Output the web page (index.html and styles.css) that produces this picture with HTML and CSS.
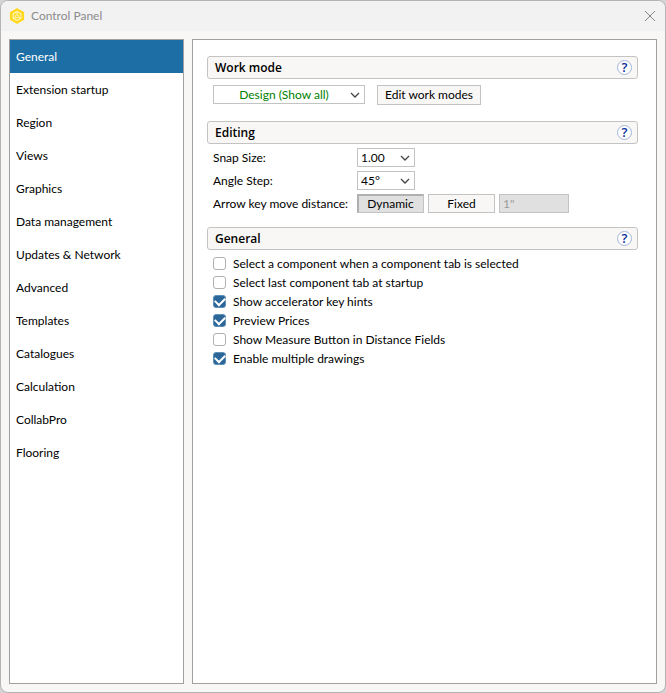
FILE: index.html
```html
<!DOCTYPE html>
<html lang="en">
<head>
<meta charset="utf-8">
<meta name="viewport" content="width=device-width, initial-scale=1">
<title>Control Panel</title>
<link rel="stylesheet" href="styles.css">
</head>
<body>
<div class="window">
  <header class="titlebar">
    <svg class="logo" viewBox="0 0 16 16" aria-hidden="true">
      <path d="M8 .8 14.5 4.4V11.6L8 15.2 1.5 11.6V4.4Z" fill="#ffd91f" stroke="#ffd91f" stroke-width="1.2" stroke-linejoin="round"/>
      <path d="M8 3.6 11.8 5.8V10.2L8 12.4 4.2 10.2V5.8Z" fill="none" stroke="#fff6bd" stroke-width="1.2" stroke-linejoin="round"/>
      <path d="M8 4V7M5 10 7 9M11 10 9 9" stroke="#fff6bd"/>
      <circle cx="8" cy="8.2" r="1.5" fill="none" stroke="#fff6bd"/>
    </svg>
    <h1 class="title">Control Panel</h1>
    <button class="close" type="button" aria-label="Close">
      <svg viewBox="0 0 12 12" aria-hidden="true"><path d="M1 1 11 11M11 1 1 11"/></svg>
    </button>
  </header>
  <div class="body">
    <nav class="nav" aria-label="Categories">
      <a class="nav-item current" href="#general" aria-current="page">General</a>
      <a class="nav-item" href="#extension">Extension startup</a>
      <a class="nav-item" href="#region">Region</a>
      <a class="nav-item" href="#views">Views</a>
      <a class="nav-item" href="#graphics">Graphics</a>
      <a class="nav-item" href="#data">Data management</a>
      <a class="nav-item" href="#updates">Updates &amp; Network</a>
      <a class="nav-item" href="#advanced">Advanced</a>
      <a class="nav-item" href="#templates">Templates</a>
      <a class="nav-item" href="#catalogues">Catalogues</a>
      <a class="nav-item" href="#calculation">Calculation</a>
      <a class="nav-item" href="#collabpro">CollabPro</a>
      <a class="nav-item" href="#flooring">Flooring</a>
    </nav>
    <main class="panel">
      <section class="group">
        <div class="group-head">
          <h2>Work mode</h2>
          <button class="help" type="button" aria-label="Help on work mode">?</button>
        </div>
        <div class="mode-row">
          <div class="combo mode">
            <select aria-label="Work mode"><option>Design (Show all)</option></select>
            <svg viewBox="0 0 10 6" aria-hidden="true"><path d="M1 1 5 5 9 1"/></svg>
          </div>
          <button class="button edit" type="button">Edit work modes</button>
        </div>
      </section>
      <section class="group">
        <div class="group-head">
          <h2>Editing</h2>
          <button class="help" type="button" aria-label="Help on editing">?</button>
        </div>
        <div class="fields">
          <label for="snap">Snap Size:</label>
          <div class="combo small">
            <select id="snap"><option>1.00</option></select>
            <svg viewBox="0 0 10 6" aria-hidden="true"><path d="M1 1 5 5 9 1"/></svg>
          </div>
          <label for="angle">Angle Step:</label>
          <div class="combo small">
            <select id="angle"><option>45°</option></select>
            <svg viewBox="0 0 10 6" aria-hidden="true"><path d="M1 1 5 5 9 1"/></svg>
          </div>
          <label for="distance">Arrow key move distance:</label>
          <div class="move">
            <button class="button pressed" type="button" aria-pressed="true">Dynamic</button>
            <button class="button" type="button" aria-pressed="false">Fixed</button>
            <input class="distance" id="distance" type="text" value="1&quot;" disabled>
          </div>
        </div>
      </section>
      <section class="group">
        <div class="group-head">
          <h2>General</h2>
          <button class="help" type="button" aria-label="Help on general settings">?</button>
        </div>
        <div class="checks">
          <label class="check"><input type="checkbox">Select a component when a component tab is selected</label>
          <label class="check"><input type="checkbox">Select last component tab at startup</label>
          <label class="check"><input type="checkbox" checked>Show accelerator key hints</label>
          <label class="check"><input type="checkbox" checked>Preview Prices</label>
          <label class="check"><input type="checkbox">Show Measure Button in Distance Fields</label>
          <label class="check"><input type="checkbox" checked>Enable multiple drawings</label>
        </div>
      </section>
    </main>
  </div>
</div>
</body>
</html>
```
FILE: styles.css
```css
* {
  box-sizing: border-box;
}

body {
  margin: 0;
  background: #d4d4d4;
  color: #000;
  font: 12px/16px Lato, "Noto Sans", sans-serif;
}

button,
select,
input {
  margin: 0;
  color: inherit;
  font: inherit;
}

.window {
  display: flex;
  flex-direction: column;
  min-height: 100vh;
  overflow: hidden;
  border: 1px solid #b4b4b4;
  border-radius: 8px;
  background: #f8f7f6;
}

.titlebar {
  display: flex;
  align-items: center;
  height: 30px;
  padding: 0 9px 0 8px;
  background: #f2f2f2;
  color: #8c8c8c;
}

.logo {
  width: 16px;
  height: 16px;
}

.title {
  flex: 1;
  margin: 0 0 0 6px;
  font-size: 12px;
  font-weight: 400;
}

.close {
  display: flex;
  padding: 0;
  border: 0;
  background: none;
}

.close svg {
  width: 12px;
  height: 12px;
  fill: none;
  stroke: #858585;
}

.body {
  display: flex;
  flex: 1;
  gap: 8px;
  padding: 8px;
}

.nav,
.panel {
  border: 1px solid #a0a0a0;
  background: #fff;
}

.nav {
  flex: none;
  width: 175px;
}

.nav-item {
  display: block;
  padding: 0 6px;
  color: #000;
  line-height: 33px;
  text-decoration: none;
}

.current {
  background: #1c6ea4;
  color: #fff;
}

.panel {
  flex: 1;
  padding: 16px 18px 16px 14px;
}

.group {
  margin-bottom: 14px;
}

.group-head {
  display: flex;
  align-items: center;
  justify-content: space-between;
  height: 23px;
  padding: 0 5px 0 7px;
  border: 1px solid #c3c3c3;
  border-radius: 3px;
  background: #f8f7f6;
}

h2 {
  margin: 0;
  font-family: "Open Sans", "Noto Sans", sans-serif;
  font-size: 12px;
  font-weight: 600;
}

.help {
  width: 15px;
  height: 15px;
  padding: 0;
  border: 1px solid #a3b6d8;
  border-radius: 50%;
  background: #fff;
  color: #0a2fa0;
  font-family: "Open Sans", "Noto Sans", sans-serif;
  font-size: 13px;
  font-weight: 600;
  line-height: 13px;
  text-align: center;
}

.mode-row {
  display: flex;
  align-items: flex-start;
  gap: 12px;
  padding: 6px 6px 2px;
}

.combo {
  display: grid;
  align-items: center;
  height: 19px;
}

.combo select,
.combo svg {
  grid-area: 1 / 1;
}

.combo select {
  width: 100%;
  height: 19px;
  padding: 0 20px 0 3px;
  border: 1px solid #c3c3c3;
  border-radius: 0;
  appearance: none;
  background: #fff;
}

.combo svg {
  justify-self: end;
  width: 10px;
  height: 6px;
  margin-right: 5px;
  fill: none;
  stroke: #444;
  stroke-width: 1.3;
  pointer-events: none;
}

.mode {
  width: 152px;
}

.combo.mode select {
  padding: 0 20px 0 10px;
  color: #008000;
  text-align-last: center;
}

.small {
  width: 58px;
}

.button {
  width: 67px;
  height: 19px;
  padding: 0;
  border: 1px solid #c3c3c3;
  background: #f8f7f6;
  line-height: 16px;
  white-space: nowrap;
}

.edit {
  width: 104px;
  height: 20px;
}

.pressed {
  border-color: #b0b0b0 #c3c3c3 #c3c3c3 #b0b0b0;
  background: #e0e0e0;
  box-shadow: inset 1px 1px #b0b0b0;
}

.fields {
  display: grid;
  grid-template-columns: 144px 1fr;
  gap: 4px 0;
  align-items: center;
  padding: 4px 0 0 6px;
  white-space: nowrap;
}

.move {
  display: flex;
  gap: 4px;
}

.distance {
  width: 70px;
  height: 19px;
  padding: 0 3px;
  border: 1px solid #c3c3c3;
  background: #e0e0e0;
  color: #9b9b9b;
}

.checks {
  padding: 4px 6px;
}

.check {
  display: flex;
  align-items: center;
  gap: 7px;
  height: 19px;
}

.check input {
  display: grid;
  place-items: center;
  flex: none;
  width: 13px;
  height: 13px;
  border: 1px solid #b0b0b0;
  border-radius: 3px;
  appearance: none;
  background: #fff;
}

.check input:checked {
  border-color: #5f8fb5;
  background: #2b6698;
}

.check input:checked::before {
  content: "";
  width: 8px;
  height: 5px;
  margin-bottom: 2px;
  border: solid #fff;
  border-width: 0 0 2px 2px;
  transform: rotate(-45deg);
}
```
